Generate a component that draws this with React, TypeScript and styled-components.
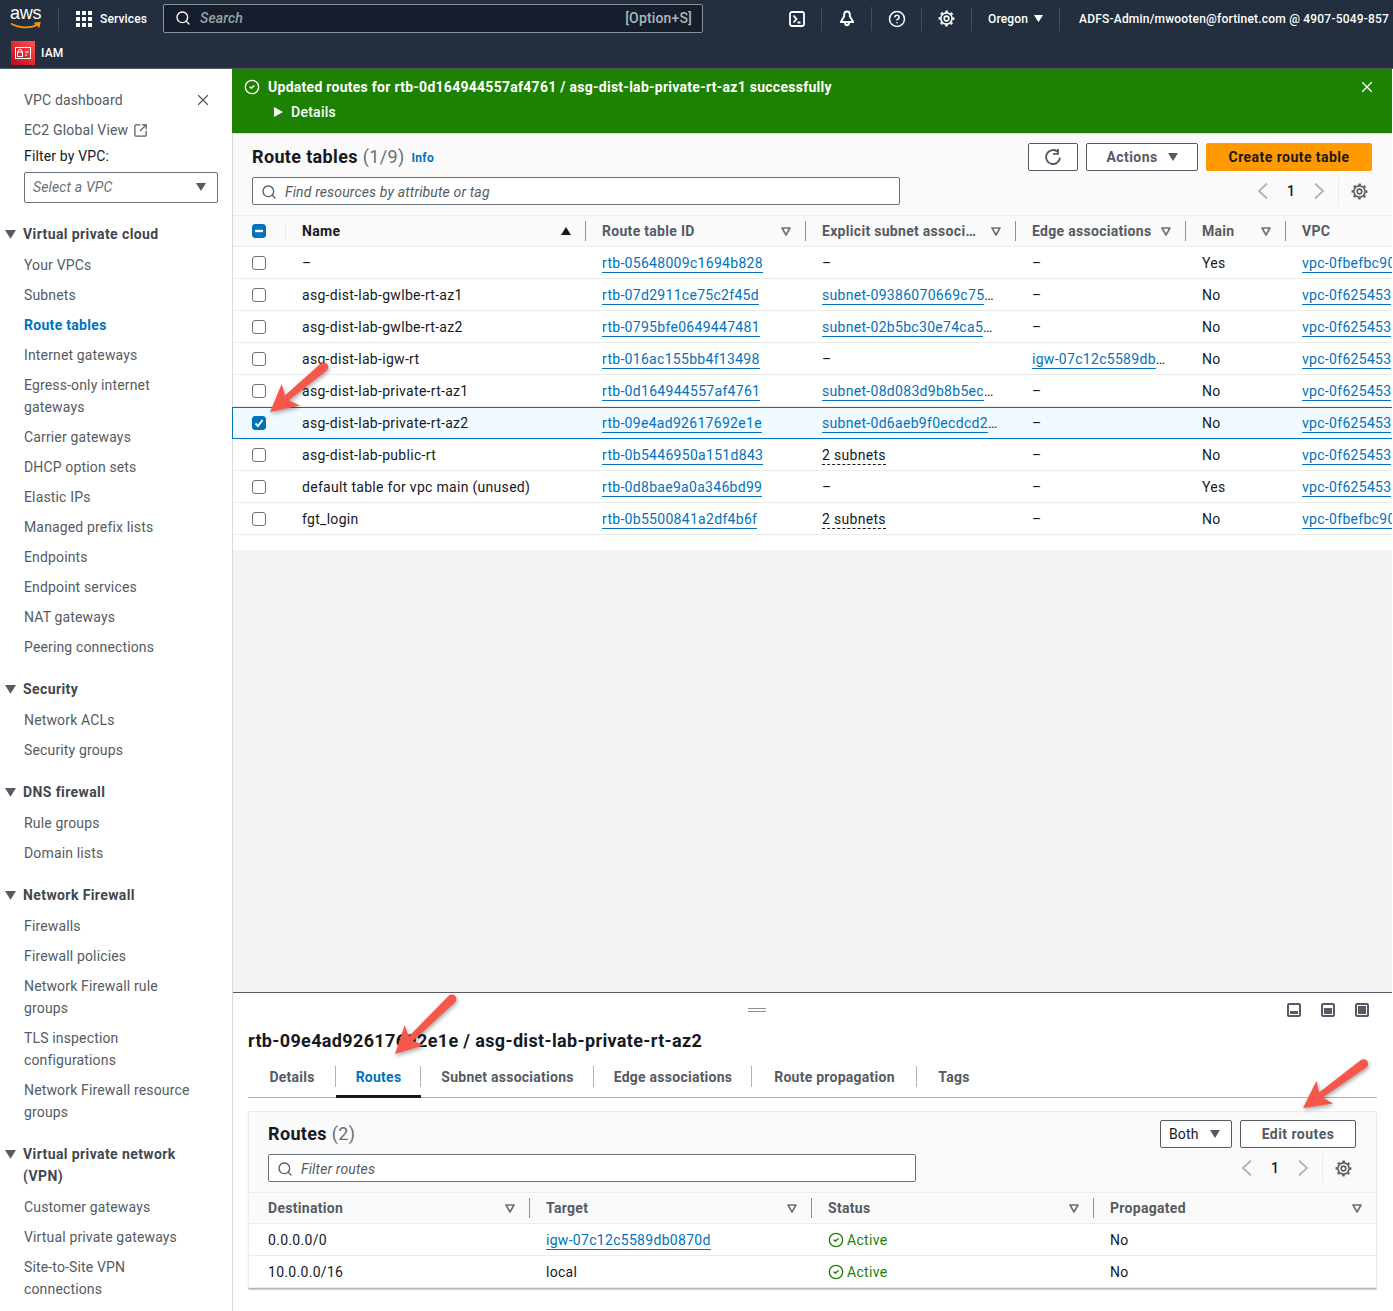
import React from 'react';
import styled, { createGlobalStyle } from 'styled-components';
import { Search, X, CircleCheck, CircleHelp, SquareArrowOutUpRight } from 'lucide-react';

const Global = createGlobalStyle`
  html, body { margin: 0; padding: 0; background: #fff; }
  body { font-family: Roboto, "Liberation Sans", Arial, sans-serif; font-size: 14px; color: #16191f; letter-spacing: 0.15px; }
  * { box-sizing: border-box; }
`;

const Page = styled.div`
  position: relative; width: 1393px; height: 1311px; overflow: hidden;
  display: flex; flex-direction: column; background: #fff;
`;
const TopBar = styled.header`
  height: 37px; background: #232f3e; color: #fff; display: flex; align-items: center; flex: none;
  padding-left: 10px; white-space: nowrap; overflow: hidden; font-size: 12px; font-weight: 500;
`;
const Logo = styled.div`
  width: 31px; height: 26px; position: relative; flex: none; margin-right: 17px; margin-top: -3px;
`;
const LogoText = styled.span`
  display: block; font-family: "Liberation Sans", Arial, sans-serif; font-size: 18px; line-height: 18px; color: #fff; letter-spacing: -0.2px;
`;
const Smile = styled.svg`
  position: absolute; left: 0; top: 18px;
`;
const BarSep = styled.span`
  width: 1px; height: 24px; background: #414d5c; flex: none;
`;
const Services = styled.div`
  display: flex; align-items: center; gap: 8px; margin-left: 17px; width: 87px; flex: none;
`;
const GlobalSearch = styled.div`
  width: 540px; height: 29px; flex: none; background: #161e2d; border: 1px solid #879596; border-radius: 2px;
  display: flex; align-items: center; padding: 0 10px 0 11px; gap: 9px; color: #aab7b8; font-size: 14px; margin-top: -1px;
`;
const SearchHint = styled.span`
  font-style: italic; flex: 1; color: #95a5a6;
`;
const IconSlot = styled.div`
  width: 49px; flex: none; display: flex; justify-content: center; align-items: center; color: #fff;
`;
const IconRow = styled.div`
  display: flex; align-items: center; margin-left: 69px;
`;
const Region = styled.div`
  display: flex; align-items: center; gap: 6px; width: 87px; padding-left: 16px; flex: none; font-weight: 500;
`;
const Account = styled.div`
  margin-left: 19px; flex: none; font-weight: 500; letter-spacing: 0.2px;
`;
const SubBar = styled.div`
  height: 32px; background: #232f3e; border-bottom: 1px solid #545b64; display: flex; align-items: center; flex: none;
  padding-left: 11px; gap: 6px; color: #fff; font-size: 12px; font-weight: 500;
`;
const Body = styled.div`
  flex: 1; display: flex; min-height: 0;
`;
const Side = styled.nav`
  width: 233px; flex: none; border-right: 1px solid #d5dbdb; padding: 16px 14px 0 0; color: #545b64; overflow: hidden;
`;
const SideLink = styled.div<{ $active?: boolean }>`
  padding: 4px 0 4px 24px; line-height: 22px; max-width: 196px;
  color: ${p => (p.$active ? '#0073bb' : '#545b64')}; font-weight: ${p => (p.$active ? 700 : 400)};
  letter-spacing: ${p => (p.$active ? 0.3 : 0.15)}px;
`;
const SideTop = styled.div`
  display: flex; align-items: center; justify-content: space-between; padding: 4px 6px 4px 24px; line-height: 22px;
`;
const SideIconLink = styled.div`
  display: flex; align-items: center; gap: 5px; padding: 4px 0 4px 24px; line-height: 22px;
`;
const SideLabel = styled.div`
  padding-left: 24px; line-height: 22px; color: #16191f;
`;
const SideSelect = styled.div`
  margin: 5px 0 0 24px; height: 31px; border: 1px solid #687078; border-radius: 2px; display: flex; align-items: center;
  justify-content: space-between; padding: 0 11px 2px 8px; font-style: italic; color: #687078;
`;
const Section = styled.section`
  margin-top: 16px;
  &:first-of-type { margin-top: 20px; }
`;
const SectionHead = styled.div`
  display: flex; align-items: flex-start; gap: 7px; padding-left: 5px; font-weight: 700; line-height: 22px; color: #414750; margin-bottom: 5px; letter-spacing: 0.4px;
`;
const SectionCaret = styled.span`
  margin-top: 7px; line-height: 0;
`;
const SectionTitle = styled.span`
  max-width: 170px;
`;
const Main = styled.main`
  flex: 1; min-width: 0; display: flex; flex-direction: column; margin-right: 1px;
`;
const Flash = styled.div`
  height: 65px; flex: none; background: #1d8102; color: #fff; font-weight: 700; margin-left: -1px; padding: 7px 16px 0 12px; border-bottom: 1px solid #d5dbdb; letter-spacing: 0.27px;
`;
const FlashRow = styled.div`
  display: flex; align-items: center; gap: 8px; height: 22px;
`;
const FlashTitle = styled.span`
  flex: 1;
`;
const FlashDetails = styled.div`
  display: flex; align-items: center; gap: 8px; height: 22px; margin: 3px 0 0 30px; font-weight: 500;
`;
const ListHead = styled.div`
  height: 82px; flex: none; background: #fafafa; border-bottom: 1px solid #eaeded; padding: 9px 20px 0 19px;
`;
const ListRow = styled.div`
  display: flex; align-items: center; justify-content: space-between; height: 28px;
`;
const ListRowGap = styled(ListRow)`
  margin-top: 6px;
`;
const TitleWrap = styled.div`
  display: flex; align-items: center;
`;
const Heading = styled.h2`
  margin: 0; font-size: 18px; line-height: 28px; font-weight: 700; color: #16191f; letter-spacing: 0.35px;
`;
const Count = styled.span`
  font-weight: 400; color: #687078;
`;
const Info = styled.span`
  font-size: 12px; font-weight: 700; color: #0073bb; margin-left: 7px; letter-spacing: 0.3px; padding-top: 2px;
`;
const Actions = styled.div`
  display: flex; gap: 8px;
`;
const Btn = styled.div<{ $w: number; $primary?: boolean; $plain?: boolean }>`
  width: ${p => p.$w}px; height: 28px; border-radius: 2px; display: flex; align-items: center; gap: 10px;
  justify-content: ${p => (p.$plain ? 'space-between' : 'center')};
  padding: ${p => (p.$plain ? '0 11px 0 8px' : '0')};
  border: 1px solid ${p => (p.$primary ? '#ff9900' : '#545b64')};
  background: ${p => (p.$primary ? '#ff9900' : '#fff')};
  color: ${p => (p.$primary ? '#16191f' : p.$plain ? '#16191f' : '#545b64')};
  font-weight: ${p => (p.$plain ? 400 : 700)}; letter-spacing: ${p => (p.$plain ? 0.15 : 0.45)}px;
`;
const FilterBox = styled.div<{ $w: number }>`
  width: ${p => p.$w}px; height: 28px; background: #fff; border: 1px solid #687078; border-radius: 2px; display: flex; align-items: center;
  padding: 1px 0 0 8px; gap: 8px; color: #545b64; font-style: italic; letter-spacing: 0.15px;
`;
const Pager = styled.div`
  display: flex; align-items: center; color: #aab7b8; height: 28px;
`;
const PagerNum = styled.span`
  width: 36px; text-align: center; color: #16191f; font-weight: 500;
`;
const PagerGear = styled.div`
  margin-left: 9px; padding: 0 4px 0 12px; height: 28px; border-left: 1px solid #eaeded; color: #545b64; display: flex; align-items: center;
`;
const Columns = styled.div<{ $cols: string; $selected?: boolean; $head?: boolean }>`
  display: grid; grid-template-columns: ${p => p.$cols}; height: ${p => (p.$head ? 31 : 32)}px; align-items: center; flex: none;
  background: ${p => (p.$selected ? '#f1faff' : p.$head ? '#fafafa' : '#fff')};
  border-bottom: 1px solid ${p => (p.$selected ? '#0073bb' : '#eaeded')};
  ${p => (p.$selected ? 'box-shadow: -1px 0 0 #0073bb, inset 0 1px 0 #0073bb;' : '')}
`;
const CheckCell = styled.div`
  padding-left: 19px; display: flex; align-items: center;
`;
const Check = styled.span<{ $on?: boolean }>`
  width: 14px; height: 14px; border-radius: 3px; display: flex; align-items: center; justify-content: center;
  background: ${p => (p.$on ? '#0073bb' : '#fff')}; border: 1px solid ${p => (p.$on ? '#0073bb' : '#687078')};
`;
const HeadCell = styled.div<{ $noSep?: boolean; $light?: boolean; $dark?: boolean; $left?: number }>`
  height: 20px; display: flex; align-items: center; justify-content: space-between; padding: 0 14px 0 ${p => p.$left ?? 16}px; font-weight: 700;
  color: ${p => (p.$dark ? '#16191f' : '#545b64')}; white-space: nowrap; overflow: hidden; letter-spacing: 0.3px;
  border-right: ${p => (p.$noSep ? 'none' : `1px solid ${p.$light ? '#eaeded' : '#879596'}`)};
`;
const Cell = styled.div<{ $left?: number }>`
  padding: 0 0 0 ${p => p.$left ?? 16}px; white-space: nowrap; overflow: hidden; line-height: 20px; height: 20px; color: #16191f; letter-spacing: 0.3px;
`;
const LinkText = styled.span`
  color: #0073bb; border-bottom: 1px solid #0073bb; padding-bottom: 1px;
`;
const Dashed = styled.span`
  border-bottom: 1px dashed #16191f; padding-bottom: 1px;
`;
const Active = styled.div`
  display: flex; align-items: center; gap: 3px; color: #1d8102; height: 20px;
`;
const Filler = styled.div`
  height: 15px; flex: none; background: #fff;
`;
const Grey = styled.div`
  flex: 1; background: #f2f3f3; min-height: 0;
`;
const Split = styled.section`
  height: 319px; flex: none; border-top: 1px solid #545b64; background: #fff; padding: 0 15px; display: flex; flex-direction: column;
`;
const SplitTools = styled.div`
  height: 33px; flex: none; display: flex; align-items: center; justify-content: space-between; padding: 1px 8px 0 500px;
`;
const Grip = styled.div`
  width: 18px; height: 4px; border-top: 1px solid #879596; border-bottom: 1px solid #879596;
`;
const PanelIcons = styled.div`
  display: flex; gap: 20px; color: #545b64;
`;
const SplitTitle = styled.h2`
  margin: 1px 0 0; font-size: 18px; line-height: 28px; font-weight: 700; height: 28px; flex: none; letter-spacing: 0.35px;
`;
const Tabs = styled.div`
  display: flex; height: 43px; flex: none; border-bottom: 1px solid #aab7b8; align-items: stretch;
`;
const Tab = styled.div<{ $active?: boolean; $last?: boolean; $w: number }>`
  position: relative; display: flex; align-items: center; justify-content: center; width: ${p => p.$w}px; font-weight: 700; height: 43px;
  letter-spacing: 0.25px; flex: none;
  color: ${p => (p.$active ? '#0073bb' : '#545b64')};
  ${p => (p.$active ? 'box-shadow: inset 0 -3px 0 #16191f;' : '')}
  &::after {
    content: ''; position: absolute; right: 0; top: 11px; height: 21px; width: 1px; background: ${p => (p.$last ? 'transparent' : '#aab7b8')};
  }
`;
const Card = styled.div`
  margin-top: 13px; height: 178px; flex: none; border: 1px solid #eaeded; border-bottom-color: #aab7b8; box-shadow: 0 1px 1px rgba(0,28,36,.2); border-radius: 1px; display: flex; flex-direction: column;
`;
const CardHead = styled.div`
  height: 81px; flex: none; background: #fafafa; border-bottom: 1px solid #eaeded; padding: 8px 20px 0 19px;
`;
const ArrowSvg = styled.svg<{ $x: number; $y: number }>`
  position: absolute; left: ${p => p.$x}px; top: ${p => p.$y}px; overflow: visible; pointer-events: none;
  filter: drop-shadow(1px 2px 2px rgba(0,0,0,.35));
`;
const SortSvg = styled.svg`
  flex: none;
`;

const Caret = ({ c = 'currentColor', s = 10 }: { c?: string; s?: number }) => (
  <svg width={s} height={s * 0.8} viewBox="0 0 10 8"><path d="M0 0h10L5 8z" fill={c} /></svg>
);
const SortDown = () => (
  <SortSvg width="10" height="9" viewBox="0 0 10 9"><path d="M1 1h8L5 8z" fill="none" stroke="#687078" strokeWidth="1.6" strokeLinejoin="round" /></SortSvg>
);
const SortUp = () => (
  <SortSvg width="10" height="8" viewBox="0 0 10 8"><path d="M0 8h10L5 0z" fill="#16191f" /></SortSvg>
);
const GridIcon = () => (
  <svg width="16" height="16" viewBox="0 0 16 16" fill="#fff">
    {[0, 6, 12].flatMap(y => [0, 6, 12].map(x => <rect key={`${x}-${y}`} x={x} y={y} width="4" height="4" />))}
  </svg>
);
const ShellIcon = () => (
  <svg width="16" height="16" viewBox="0 0 16 16" fill="none" stroke="#fff" strokeWidth="1.8">
    <rect x="1" y="1" width="14" height="14" rx="2" /><path d="M4.5 4.5L7.5 8l-3 3.5M8.5 11.5H11.5" />
  </svg>
);
const BellIcon = () => (
  <svg width="16" height="17" viewBox="0 0 16 17" fill="none" stroke="#fff" strokeWidth="1.9" strokeLinejoin="round">
    <path d="M8 1.5c-1.800 0-2.800 1.300-2.800 3v1.700L1.800 12h12.400l-3.400-5.800V4.500c0-1.700-1-3-2.800-3zM6 12.500c0 1.600.8 2.700 2 2.700s2-1.100 2-2.700" />
  </svg>
);
const GearIcon = ({ s = 16 }: { s?: number }) => (
  <svg width={s} height={s} viewBox="0 0 16 16" fill="none" stroke="currentColor" strokeWidth="1.5">
    <circle cx="8" cy="8" r="5.300" />
    <circle cx="8" cy="8" r="6.700" strokeDasharray="2.500 2.760" strokeDashoffset="1.250" />
    <circle cx="8" cy="8" r="2.200" />
  </svg>
);
const RefreshIcon = () => (
  <svg width="18" height="18" viewBox="0 0 16 16" fill="none" stroke="currentColor" strokeWidth="1.7">
    <path d="M14.200 8.500A6.200 6.200 0 1 1 11.600 3" /><path d="M12.400 .8v4.400H8" />
  </svg>
);
const ChevLeft = () => (
  <svg width="20" height="18" viewBox="0 0 20 18" fill="none" stroke="currentColor" strokeWidth="1.8"><path d="M14 1.500L6 9l8 7.500" /></svg>
);
const ChevRight = () => (
  <svg width="20" height="18" viewBox="0 0 20 18" fill="none" stroke="currentColor" strokeWidth="1.8"><path d="M6 1.500L14 9l-8 7.500" /></svg>
);
const IamIcon = () => (
  <svg width="24" height="24" viewBox="0 0 24 24">
    <defs><linearGradient id="iam" x1="0" y1="1" x2="1" y2="0"><stop offset="0" stopColor="#bd0816" /><stop offset="1" stopColor="#ff5252" /></linearGradient></defs>
    <rect width="24" height="24" fill="url(#iam)" />
    <rect x="4.500" y="6.500" width="15" height="11" fill="none" stroke="#fff" />
    <rect x="6.500" y="11" width="5" height="4.500" fill="none" stroke="#fff" />
    <path d="M7.500 11V9.700a1.500 1.500 0 013 0V11M14 11h3.500M14 14h2" fill="none" stroke="#fff" />
  </svg>
);
const PanelIcon = ({ y, h }: { y: number; h: number }) => (
  <svg width="14" height="14" viewBox="0 0 14 14">
    <rect x="1" y="1" width="12" height="12" rx="1" fill="none" stroke="currentColor" strokeWidth="2" />
    <rect x="3" y={y} width="8" height={h} fill="currentColor" />
  </svg>
);
const Arrow = ({ tail, tip }: { tail: [number, number]; tip: [number, number] }) => {
  const dx = tail[0] - tip[0];
  const dy = tail[1] - tip[1];
  const len = Math.hypot(dx, dy);
  const ux = dx / len, uy = dy / len, nx = -uy, ny = ux;
  const pt = (a: number, n: number) => `${(a * ux + n * nx + 60).toFixed(1)} ${(a * uy + n * ny + 60).toFixed(1)}`;
  const d = `M${pt(0, 0)}L${pt(27, -14)}L${pt(22, -3)}L${pt(len - 3, -4.500)}A4.500 4.500 0 0 1 ${pt(len - 3, 4.500)}L${pt(22, 3)}L${pt(27, 14)}Z`;
  return (
    <ArrowSvg $x={tip[0] - 60} $y={tip[1] - 60} width="120" height="120" viewBox="0 0 120 120">
      <path d={d} fill="#f6574a" />
    </ArrowSvg>
  );
};

const sections: { title: string; items: { t: string; active?: boolean }[] }[] = [
  { title: 'Virtual private cloud', items: ['Your VPCs', 'Subnets', 'Route tables', 'Internet gateways', 'Egress-only internet gateways', 'Carrier gateways', 'DHCP option sets', 'Elastic IPs', 'Managed prefix lists', 'Endpoints', 'Endpoint services', 'NAT gateways', 'Peering connections'].map(t => ({ t, active: t === 'Route tables' })) },
  { title: 'Security', items: ['Network ACLs', 'Security groups'].map(t => ({ t })) },
  { title: 'DNS firewall', items: ['Rule groups', 'Domain lists'].map(t => ({ t })) },
  { title: 'Network Firewall', items: ['Firewalls', 'Firewall policies', 'Network Firewall rule groups', 'TLS inspection configurations', 'Network Firewall resource groups'].map(t => ({ t })) },
  { title: 'Virtual private network (VPN)', items: ['Customer gateways', 'Virtual private gateways', 'Site-to-Site VPN connections'].map(t => ({ t })) },
];

const tableCols = '53px 300px 220px 210px 170px 100px 106px';
type Row = { name: string; id: string; subnet?: string; subnets?: boolean; edge?: string; main: string; vpc: string; selected?: boolean };
const vpcA = 'vpc-0fbefbc90';
const vpcB = 'vpc-0f625453';
const rows: Row[] = [
  { name: '–', id: 'rtb-05648009c1694b828', main: 'Yes', vpc: vpcA },
  { name: 'asg-dist-lab-gwlbe-rt-az1', id: 'rtb-07d2911ce75c2f45d', subnet: 'subnet-09386070669c75', main: 'No', vpc: vpcB },
  { name: 'asg-dist-lab-gwlbe-rt-az2', id: 'rtb-0795bfe0649447481', subnet: 'subnet-02b5bc30e74ca5', main: 'No', vpc: vpcB },
  { name: 'asg-dist-lab-igw-rt', id: 'rtb-016ac155bb4f13498', edge: 'igw-07c12c5589db', main: 'No', vpc: vpcB },
  { name: 'asg-dist-lab-private-rt-az1', id: 'rtb-0d164944557af4761', subnet: 'subnet-08d083d9b8b5ec', main: 'No', vpc: vpcB },
  { name: 'asg-dist-lab-private-rt-az2', id: 'rtb-09e4ad92617692e1e', subnet: 'subnet-0d6aeb9f0ecdcd2', main: 'No', vpc: vpcB, selected: true },
  { name: 'asg-dist-lab-public-rt', id: 'rtb-0b5446950a151d843', subnets: true, main: 'No', vpc: vpcB },
  { name: 'default table for vpc main (unused)', id: 'rtb-0d8bae9a0a346bd99', main: 'Yes', vpc: vpcB },
  { name: 'fgt_login', id: 'rtb-0b5500841a2df4b6f', subnets: true, main: 'No', vpc: vpcA },
];
const routeCols = '281px 282px 282px 1fr';
const routes = [
  { dest: '0.0.0.0/0', target: 'igw-07c12c5589db0870d', link: true },
  { dest: '10.0.0.0/16', target: 'local', link: false },
];
const tabs = [
  { t: 'Details', w: 88 },
  { t: 'Routes', w: 85, active: true },
  { t: 'Subnet associations', w: 173 },
  { t: 'Edge associations', w: 158 },
  { t: 'Route propagation', w: 165 },
  { t: 'Tags', w: 74, last: true },
];

const PagerBlock = () => (
  <Pager>
    <ChevLeft />
    <PagerNum>1</PagerNum>
    <ChevRight />
    <PagerGear><GearIcon s={17} /></PagerGear>
  </Pager>
);

export default function App() {
  return (
    <Page>
      <Global />
      <TopBar>
        <Logo>
          <LogoText>aws</LogoText>
          <Smile width="31" height="8" viewBox="0 0 31 8">
            <path d="M1 1.500C8 6 20 7 28 2.500M24.500 1.500L29.500 1 28.500 5.500" fill="none" stroke="#ff9900" strokeWidth="1.800" />
          </Smile>
        </Logo>
        <BarSep />
        <Services><GridIcon /><span>Services</span></Services>
        <GlobalSearch>
          <Search size={16} color="#fff" strokeWidth={2} />
          <SearchHint>Search</SearchHint>
          <span>[Option+S]</span>
        </GlobalSearch>
        <IconRow>
          <IconSlot><ShellIcon /></IconSlot>
          <BarSep />
          <IconSlot><BellIcon /></IconSlot>
          <BarSep />
          <IconSlot><CircleHelp size={18} strokeWidth={2} /></IconSlot>
          <BarSep />
          <IconSlot><GearIcon s={17} /></IconSlot>
          <BarSep />
          <Region><span>Oregon</span><Caret c="#fff" s={9} /></Region>
          <BarSep />
        </IconRow>
        <Account>ADFS-Admin/mwooten@fortinet.com @ 4907-5049-857</Account>
      </TopBar>
      <SubBar><IamIcon /><span>IAM</span></SubBar>
      <Body>
        <Side>
          <SideTop><span>VPC dashboard</span><X size={18} strokeWidth={1.6} color="#545b64" /></SideTop>
          <SideIconLink><span>EC2 Global View</span><SquareArrowOutUpRight size={15} strokeWidth={2} /></SideIconLink>
          <SideLabel>Filter by VPC:</SideLabel>
          <SideSelect><span>Select a VPC</span><Caret c="#545b64" /></SideSelect>
          {sections.map(s => (
            <Section key={s.title}>
              <SectionHead>
                <SectionCaret><Caret c="#545b64" s={11} /></SectionCaret>
                <SectionTitle>{s.title}</SectionTitle>
              </SectionHead>
              {s.items.map(i => <SideLink key={i.t} $active={i.active}>{i.t}</SideLink>)}
            </Section>
          ))}
        </Side>
        <Main>
          <Flash>
            <FlashRow>
              <CircleCheck size={16} strokeWidth={2} />
              <FlashTitle>Updated routes for rtb-0d164944557af4761 / asg-dist-lab-private-rt-az1 successfully</FlashTitle>
              <X size={18} strokeWidth={1.6} />
            </FlashRow>
            <FlashDetails>
              <svg width="9" height="10" viewBox="0 0 9 10"><path d="M0 0l9 5-9 5z" fill="#fff" /></svg>
              <span>Details</span>
            </FlashDetails>
          </Flash>
          <ListHead>
            <ListRow>
              <TitleWrap>
                <Heading>Route tables <Count>(1/9)</Count></Heading>
                <Info>Info</Info>
              </TitleWrap>
              <Actions>
                <Btn $w={50}><RefreshIcon /></Btn>
                <Btn $w={112}><span>Actions</span><Caret /></Btn>
                <Btn $w={166} $primary><span>Create route table</span></Btn>
              </Actions>
            </ListRow>
            <ListRowGap>
              <FilterBox $w={648}><Search size={16} strokeWidth={2} /><span>Find resources by attribute or tag</span></FilterBox>
              <PagerBlock />
            </ListRowGap>
          </ListHead>
          <Columns $cols={tableCols} $head>
            <HeadCell $light $left={19}>
              <Check $on><svg width="10" height="10" viewBox="0 0 10 10"><rect x="1" y="3.800" width="8" height="2.400" fill="#fff" /></svg></Check>
            </HeadCell>
            <HeadCell $dark><span>Name</span><SortUp /></HeadCell>
            <HeadCell><span>Route table ID</span><SortDown /></HeadCell>
            <HeadCell><span>Explicit subnet associ…</span><SortDown /></HeadCell>
            <HeadCell><span>Edge associations</span><SortDown /></HeadCell>
            <HeadCell><span>Main</span><SortDown /></HeadCell>
            <HeadCell $noSep><span>VPC</span></HeadCell>
          </Columns>
          {rows.map(r => (
            <Columns key={r.id} $cols={tableCols} $selected={r.selected}>
              <CheckCell>
                <Check $on={r.selected}>
                  {r.selected && <svg width="12" height="12" viewBox="0 0 12 12"><path d="M2.500 6.500L5 9l4.500-6" fill="none" stroke="#fff" strokeWidth="2" /></svg>}
                </Check>
              </CheckCell>
              <Cell>{r.name}</Cell>
              <Cell><LinkText>{r.id}</LinkText></Cell>
              <Cell>
                {r.subnet ? <><LinkText>{r.subnet}</LinkText>…</> : r.subnets ? <Dashed>2 subnets</Dashed> : '–'}
              </Cell>
              <Cell>{r.edge ? <><LinkText>{r.edge}</LinkText>…</> : '–'}</Cell>
              <Cell>{r.main}</Cell>
              <Cell><LinkText>{r.vpc}</LinkText></Cell>
            </Columns>
          ))}
          <Filler />
          <Grey />
          <Split>
            <SplitTools>
              <Grip />
              <PanelIcons>
                <PanelIcon y={8} h={3} />
                <PanelIcon y={5} h={6} />
                <PanelIcon y={3} h={8} />
              </PanelIcons>
            </SplitTools>
            <SplitTitle>rtb-09e4ad92617692e1e / asg-dist-lab-private-rt-az2</SplitTitle>
            <Tabs>
              {tabs.map(t => <Tab key={t.t} $w={t.w} $active={t.active} $last={t.last}>{t.t}</Tab>)}
            </Tabs>
            <Card>
              <CardHead>
                <ListRow>
                  <Heading>Routes <Count>(2)</Count></Heading>
                  <Actions>
                    <Btn $w={72} $plain><span>Both</span><Caret c="#545b64" /></Btn>
                    <Btn $w={116}><span>Edit routes</span></Btn>
                  </Actions>
                </ListRow>
                <ListRowGap>
                  <FilterBox $w={648}><Search size={16} strokeWidth={2} /><span>Filter routes</span></FilterBox>
                  <PagerBlock />
                </ListRowGap>
              </CardHead>
              <Columns $cols={routeCols} $head>
                <HeadCell $left={19}><span>Destination</span><SortDown /></HeadCell>
                <HeadCell><span>Target</span><SortDown /></HeadCell>
                <HeadCell><span>Status</span><SortDown /></HeadCell>
                <HeadCell $noSep><span>Propagated</span><SortDown /></HeadCell>
              </Columns>
              {routes.map(r => (
                <Columns key={r.dest} $cols={routeCols}>
                  <Cell $left={19}>{r.dest}</Cell>
                  <Cell>{r.link ? <LinkText>{r.target}</LinkText> : r.target}</Cell>
                  <Cell><Active><CircleCheck size={16} strokeWidth={2} />Active</Active></Cell>
                  <Cell>No</Cell>
                </Columns>
              ))}
            </Card>
          </Split>
        </Main>
      </Body>
      <Arrow tail={[326, 365]} tip={[270, 412]} />
      <Arrow tail={[454, 997]} tip={[395, 1054]} />
      <Arrow tail={[1366, 1062]} tip={[1303, 1108]} />
    </Page>
  );
}
